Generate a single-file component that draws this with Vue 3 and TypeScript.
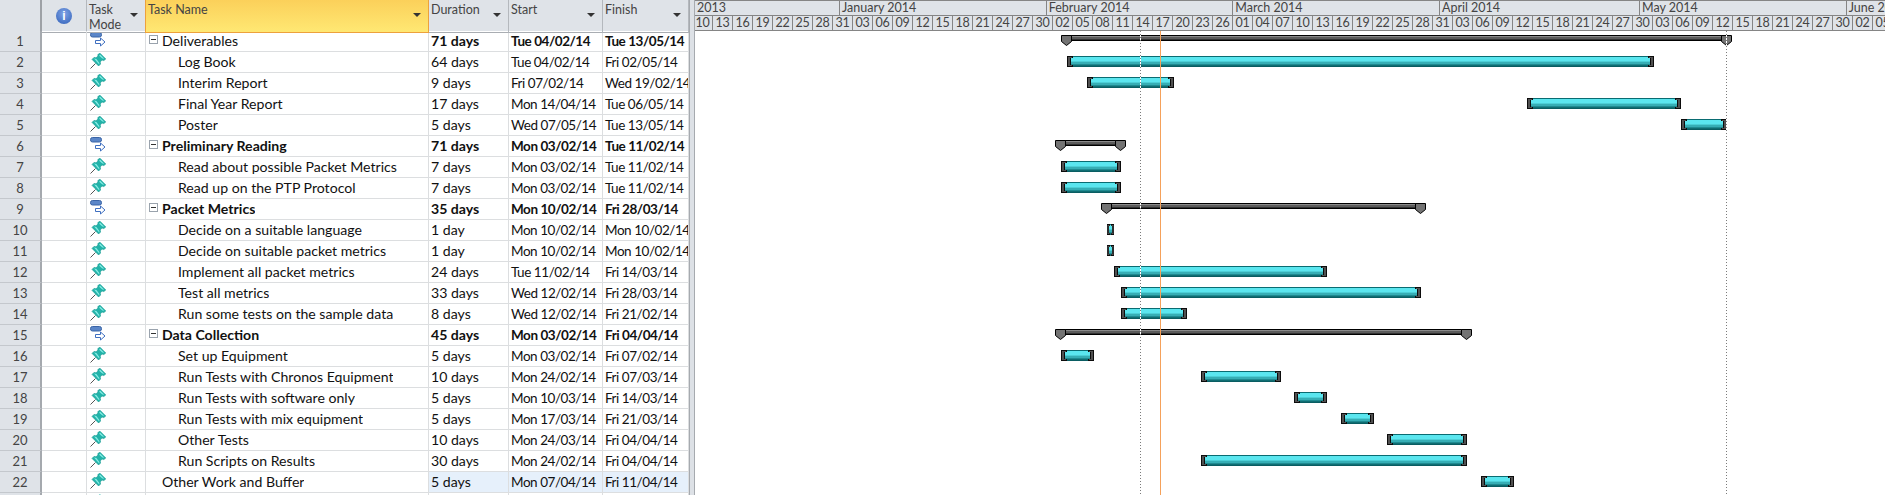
<script setup lang="ts">
interface Task {
  name: string
  dur: string
  start: string
  finish: string
  level: number
  summary?: boolean
  plain?: boolean
  selected?: boolean
}

const PX_DAY = 20 / 3
const CHART_X = 695
const JAN1_X = 840
const BAR_SHIFT = 0.6

const tasks: Task[] = [
  { name: 'Deliverables', dur: '71 days', start: 'Tue 04/02/14', finish: 'Tue 13/05/14', level: 0, summary: true, plain: true },
  { name: 'Log Book', dur: '64 days', start: 'Tue 04/02/14', finish: 'Fri 02/05/14', level: 1 },
  { name: 'Interim Report', dur: '9 days', start: 'Fri 07/02/14', finish: 'Wed 19/02/14', level: 1 },
  { name: 'Final Year Report', dur: '17 days', start: 'Mon 14/04/14', finish: 'Tue 06/05/14', level: 1 },
  { name: 'Poster', dur: '5 days', start: 'Wed 07/05/14', finish: 'Tue 13/05/14', level: 1 },
  { name: 'Preliminary Reading', dur: '71 days', start: 'Mon 03/02/14', finish: 'Tue 11/02/14', level: 0, summary: true },
  { name: 'Read about possible Packet Metrics', dur: '7 days', start: 'Mon 03/02/14', finish: 'Tue 11/02/14', level: 1 },
  { name: 'Read up on the PTP Protocol', dur: '7 days', start: 'Mon 03/02/14', finish: 'Tue 11/02/14', level: 1 },
  { name: 'Packet Metrics', dur: '35 days', start: 'Mon 10/02/14', finish: 'Fri 28/03/14', level: 0, summary: true },
  { name: 'Decide on a suitable language', dur: '1 day', start: 'Mon 10/02/14', finish: 'Mon 10/02/14', level: 1 },
  { name: 'Decide on suitable packet metrics', dur: '1 day', start: 'Mon 10/02/14', finish: 'Mon 10/02/14', level: 1 },
  { name: 'Implement all packet metrics', dur: '24 days', start: 'Tue 11/02/14', finish: 'Fri 14/03/14', level: 1 },
  { name: 'Test all metrics', dur: '33 days', start: 'Wed 12/02/14', finish: 'Fri 28/03/14', level: 1 },
  { name: 'Run some tests on the sample data', dur: '8 days', start: 'Wed 12/02/14', finish: 'Fri 21/02/14', level: 1 },
  { name: 'Data Collection', dur: '45 days', start: 'Mon 03/02/14', finish: 'Fri 04/04/14', level: 0, summary: true },
  { name: 'Set up Equipment', dur: '5 days', start: 'Mon 03/02/14', finish: 'Fri 07/02/14', level: 1 },
  { name: 'Run Tests with Chronos Equipment', dur: '10 days', start: 'Mon 24/02/14', finish: 'Fri 07/03/14', level: 1 },
  { name: 'Run Tests with software only', dur: '5 days', start: 'Mon 10/03/14', finish: 'Fri 14/03/14', level: 1 },
  { name: 'Run Tests with mix equipment', dur: '5 days', start: 'Mon 17/03/14', finish: 'Fri 21/03/14', level: 1 },
  { name: 'Other Tests', dur: '10 days', start: 'Mon 24/03/14', finish: 'Fri 04/04/14', level: 1 },
  { name: 'Run Scripts on Results', dur: '30 days', start: 'Mon 24/02/14', finish: 'Fri 04/04/14', level: 1 },
  { name: 'Other Work and Buffer', dur: '5 days', start: 'Mon 07/04/14', finish: 'Fri 11/04/14', level: 0, selected: true },
]

const columns = [
  { label: 'Task Mode', cls: 'mode' },
  { label: 'Task Name', cls: 'name' },
  { label: 'Duration', cls: '' },
  { label: 'Start', cls: '' },
  { label: 'Finish', cls: '' },
]

function dayOf(text: string): number {
  const [d, m, y] = text.split(' ')[1].split('/').map(Number)
  return (Date.UTC(2000 + y, m - 1, d) - Date.UTC(2014, 0, 1)) / 86400000
}

function barStyle(t: Task) {
  const from = dayOf(t.start)
  const to = dayOf(t.finish) + 1
  return { left: JAN1_X - CHART_X + BAR_SHIFT + from * PX_DAY + 'px', width: (to - from) * PX_DAY + 'px' }
}

const months = [
  { label: '2013', width: JAN1_X - CHART_X },
  { label: 'January 2014', width: 31 * PX_DAY },
  { label: 'February 2014', width: 28 * PX_DAY },
  { label: 'March 2014', width: 31 * PX_DAY },
  { label: 'April 2014', width: 30 * PX_DAY },
  { label: 'May 2014', width: 31 * PX_DAY },
  { label: 'June 2014', width: 30 * PX_DAY },
]

// lower tier ticks, one every three days from 10 Dec 2013
const ticks: string[] = []
for (let i = 0; i < 60; i++) {
  const d = new Date(Date.UTC(2013, 11, 10 + i * 3))
  ticks.push(String(d.getUTCDate()).padStart(2, '0'))
}

const lines = [
  { x: 1140 - CHART_X, cls: 'dotted' },
  { x: 1160 - CHART_X, cls: 'status' },
  { x: 1726 - CHART_X, cls: 'dotted' },
]
</script>

<template>
  <div class="app">
    <section class="sheet">
      <header class="row head">
        <div class="hc" />
        <div class="hc info"><span class="info-dot">i</span></div>
        <div v-for="c in columns" :key="c.label" class="hc col" :class="c.cls">
          <span class="col-label">{{ c.label }}</span>
          <span class="sort" />
        </div>
      </header>
      <div v-for="(t, i) in tasks" :key="t.name" class="row" :class="{ bold: t.summary }">
        <div class="c id">{{ i + 1 }}</div>
        <div class="c" />
        <div class="c icon">
          <svg v-if="t.summary" width="17" height="15" viewBox="0 0 17 15">
            <rect x="0.5" y="0.5" width="11" height="4.5" rx="2" fill="#5b86c8" stroke="#3a64a6" />
            <path d="M5.5 8.5h5v-2.5l4.5 4-4.5 4v-2.5h-5z" fill="#fff" stroke="#3f6fc0" />
          </svg>
          <svg v-else width="16" height="16" viewBox="0 0 16 16">
            <path d="M.5 15.5L5.5 10.5" stroke="#555" stroke-width="1" />
            <path d="M10 .2L15.8 6L13.8 7.6L12 7L10.2 9L10.6 11L8.6 13L2 6.4L4 4.4L6 4.8L8 3L7.8 1.6Z" fill="#22b3a9" stroke="#179a92" stroke-width=".6" />
            <path d="M10 1.6L14.2 5.8L12.4 5.6L9.2 2.8ZM4 5.6L6.4 6L9.4 10L9.2 11.4Z" fill="#86ece4" />
          </svg>
        </div>
        <div class="c task" :class="['lvl' + t.level, { plain: t.plain }]">
          <span v-if="t.summary" class="fold" />
          <span class="clip">{{ t.name }}</span>
        </div>
        <div class="c txt" :class="{ sel: t.selected }">{{ t.dur }}</div>
        <div class="c txt date" :class="{ sel: t.selected }">{{ t.start }}</div>
        <div class="c txt date" :class="{ sel: t.selected }">{{ t.finish }}</div>
      </div>
      <div class="row">
        <div class="c id" />
        <div class="c" />
        <div class="c icon">
          <svg width="16" height="16" viewBox="0 0 16 16">
            <path d="M10 .2L15.8 6L13.8 7.6L12 7L10.2 9L10.6 11L8.6 13L2 6.4L4 4.4L6 4.8L8 3L7.8 1.6Z" fill="#22b3a9" />
          </svg>
        </div>
        <div class="c" />
        <div class="c" />
        <div class="c" />
        <div class="c" />
      </div>
    </section>

    <div class="splitter" />

    <section class="chart">
      <div class="scale">
        <div class="tier top">
          <div v-for="m in months" :key="m.label" class="month" :style="{ width: m.width + 'px' }">{{ m.label }}</div>
        </div>
        <div class="tier low">
          <div v-for="(d, i) in ticks" :key="i" class="tick">{{ d }}</div>
        </div>
      </div>
      <div class="canvas">
        <div v-for="t in tasks" :key="t.name" class="lane">
          <div v-if="t.summary" class="sum" :style="barStyle(t)">
            <svg class="tip left" width="11" height="11" viewBox="0 0 11 11">
              <path d="M.5.5h10v6l-5 4-5-4z" fill="#737373" stroke="#000" />
            </svg>
            <svg class="tip right" width="11" height="11" viewBox="0 0 11 11">
              <path d="M.5.5h10v6l-5 4-5-4z" fill="#737373" stroke="#000" />
            </svg>
          </div>
          <div v-else class="bar" :class="{ short: t.dur === '1 day' }" :style="barStyle(t)">
            <svg class="cap left" viewBox="0 0 6 11" preserveAspectRatio="none">
              <path d="M0 0H6V2H4V9H6V11H0Z" fill="#0c0c0c" />
              <path d="M1 1H5V2H3V9H5V10H1Z" fill="#505050" />
            </svg>
            <svg class="cap right" viewBox="0 0 6 11" preserveAspectRatio="none">
              <path d="M0 0H6V2H4V9H6V11H0Z" fill="#0c0c0c" />
              <path d="M1 1H5V2H3V9H5V10H1Z" fill="#505050" />
            </svg>
          </div>
        </div>
        <div v-for="l in lines" :key="l.x" class="vline" :class="l.cls" :style="{ left: l.x + 'px' }" />
      </div>
    </section>
  </div>
</template>

<style>
html, body { margin: 0; background: #fff; overflow: hidden; }
</style>

<style scoped>
.app { display: flex; width: 1885px; height: 495px; overflow: hidden; font-family: Lato, "Liberation Sans", sans-serif; color: #111; }

.sheet { width: 689px; flex: none; }
.row { display: grid; grid-template-columns: 42px 45px 59px 283px 80px 94px 86px; height: 21px; font-size: 14.1px; }
.row.bold { font-weight: 700; }
.head { height: 31px; font-size: 12.5px; color: #444; background: #dfe3e8; }

.hc { border-right: 1px solid #b4b8bd; border-bottom: 1px solid #a9adb2; display: flex; }
.hc:first-child { border-right: 2px solid #9da1a6; }
.info { align-items: center; justify-content: center; }
.info-dot { width: 16px; height: 16px; border-radius: 50%; background: radial-gradient(circle at 50% 35%, #7fa4e6, #2f5fb8); color: #fff; font: 700 12px/16px "Liberation Sans", sans-serif; text-align: center; }
.col { padding: 2px 7px 0 2px; align-items: flex-start; justify-content: space-between; position: relative; }
.col-label { line-height: 15px; }
.col.mode .col-label { width: 40px; }
.col.name { background: linear-gradient(#fbd05a, #ffe873); border-right-color: #eda13c; border-bottom: 1px solid #eda13c; border-left: 1px solid #eda13c; margin-left: -1px; }
.sort { width: 0; height: 0; margin-top: 11px; border-left: 4px solid transparent; border-right: 4px solid transparent; border-top: 4px solid #333; }

.c { border-right: 1px solid #dcdee0; border-bottom: 1px solid #dcdee0; overflow: hidden; white-space: nowrap; line-height: 20px; }
.id { background: #dfe3e8; border-right: 2px solid #a5a9ae; border-bottom-color: #c4c8cd; text-align: center; color: #444; font-weight: 400; font-size: 13px; }
.icon { padding: 1px 0 0 3px; }
.icon svg { display: block; }
.txt { padding-left: 2px; }
.date { font-size: 13.5px; letter-spacing: -.45px; }
.sel { background: #e6f0fb; }
.task { display: flex; align-items: center; }
.task.plain { font-weight: 400; }
.lvl0 { padding-left: 16px; }
.lvl1 { padding-left: 32px; }
.lvl0:has(.fold) { padding-left: 3px; }
.clip { overflow: hidden; }
.fold { width: 9px; height: 9px; margin-right: 4px; border: 1px solid #9aa3ad; background: linear-gradient(#333, #333) center / 5px 1px no-repeat, #fff; box-sizing: border-box; flex: none; margin-top: -3px; }

.splitter { width: 6px; flex: none; background: #dde1e6; border-left: 1px solid #a6aaaf; border-right: 1px solid #a6aaaf; box-sizing: border-box; }

.chart { flex: 1; min-width: 0; overflow: hidden; }
.scale { height: 31px; background: #dfe3e8; font-size: 12.5px; color: #444; }
.tier { display: flex; white-space: nowrap; }
.top { height: 15px; border-top: 1px solid #858585; box-sizing: border-box; }
.month { flex: none; box-sizing: border-box; padding-left: 2px; border-right: 1px solid #858585; line-height: 14px; overflow: hidden; }
.low { height: 16px; margin-left: -2px; border-top: 1px solid #858585; border-bottom: 1px solid #858585; box-sizing: border-box; }
.tick { flex: none; width: 20px; box-sizing: border-box; border-right: 1px solid #858585; text-align: center; line-height: 14px; letter-spacing: -.2px; }

.canvas { position: relative; height: 464px; overflow: hidden; }
.lane { position: relative; height: 21px; }

.bar { position: absolute; top: 4px; height: 11px; background: linear-gradient(#0a6c72 0 1px, #5be6ef 1px 5px, #4ccfd6 5px 6px, #36aeb5 6px 8px, #1f8a90 8px 9px, #0f6d72 9px 10px, #0a5d62 10px); }
.cap { position: absolute; top: 0; width: 6px; height: 11px; }
.cap.left { left: 0; }
.cap.right { right: 0; transform: scaleX(-1); }
.short .cap { width: 3px; }

.sum { position: absolute; top: 4px; height: 6px; background: linear-gradient(#000 0 1px, #8a8a8a 1px 2px, #5c5c5c 2px 4px, #333 4px 5px, #000 5px); }
.tip { position: absolute; top: 0; }
.tip.left { left: -6px; }
.tip.right { right: -5px; }

.vline { position: absolute; top: 0; bottom: 0; width: 1px; }
.dotted { background: repeating-linear-gradient(#7b7b7b 0 1px, #fff 1px 3px); }
.status { background: #f5a15a; }
</style>
